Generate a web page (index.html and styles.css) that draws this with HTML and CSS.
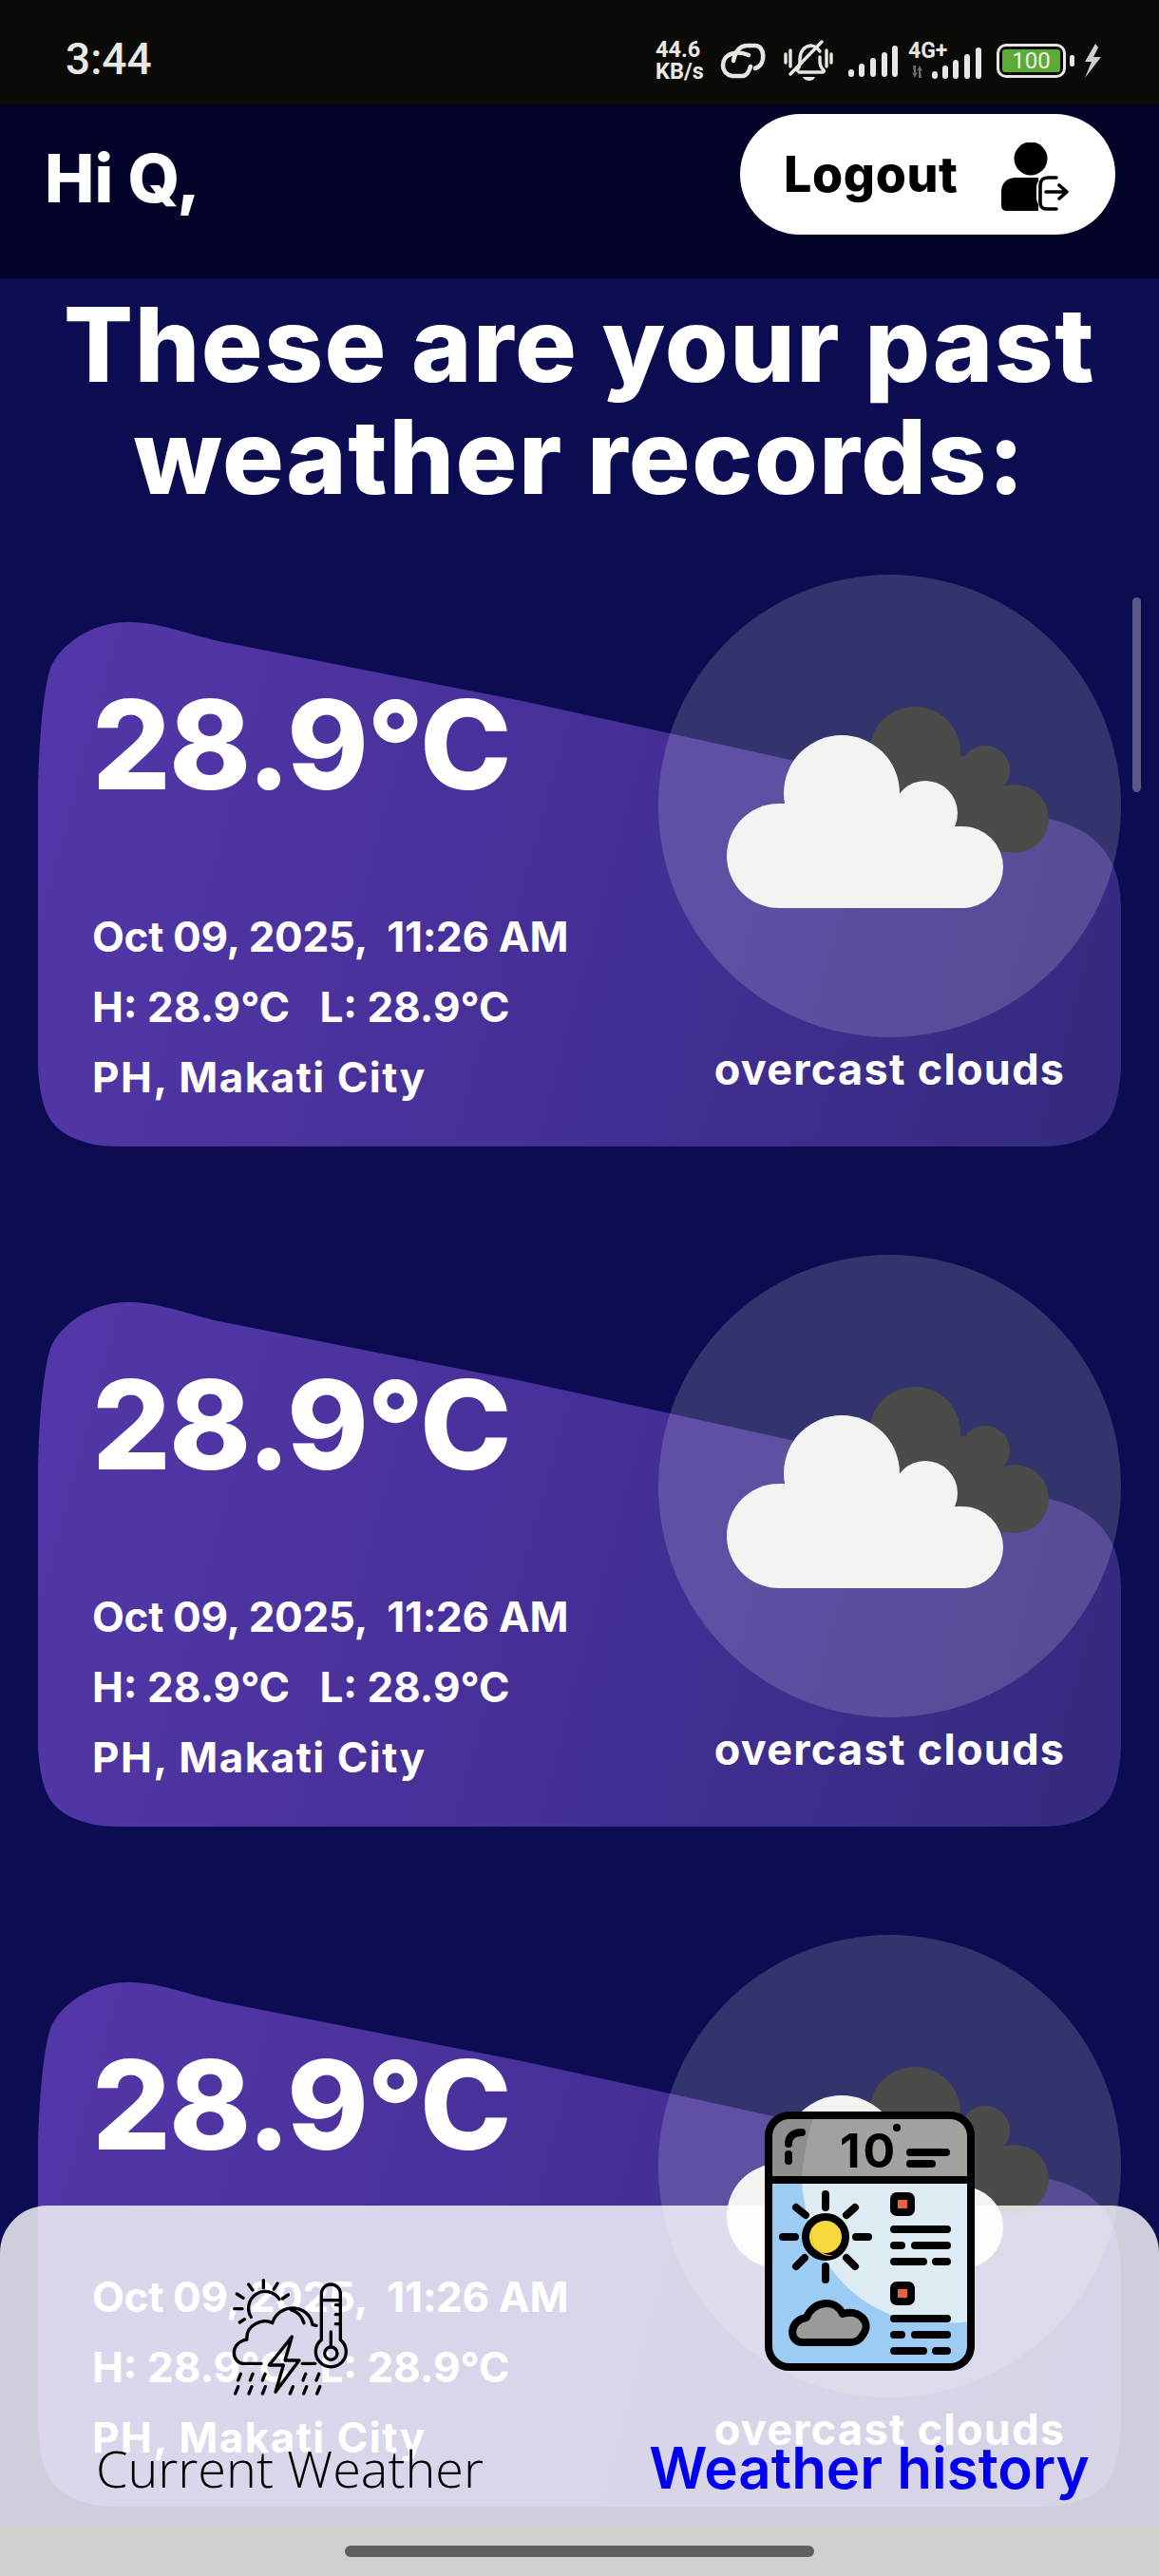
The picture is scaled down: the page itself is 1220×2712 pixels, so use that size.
FILE: index.html
```html
<!DOCTYPE html>
<html lang="en">
<head>
<meta charset="utf-8">
<title>Weather history</title>
<link rel="stylesheet" href="styles.css">
</head>
<body>
<div class="screen">
  <div class="status">
    <span class="clock">3:44</span>
    <div class="status-icons">
      <div class="speed"><span>44.6</span><span>KB/s</span></div>
      <svg class="ico-link" viewBox="0 0 49 40"><g fill="none" stroke="#e6e6e2" stroke-width="4.6" stroke-linecap="round"><path d="M31 14C24 11 17 11 12 13 2 17 0 33 14 36H24C29 36 32 30 33 26"/><path d="M15 20C17 10 22 4 30 4H38C48 4 50 24 38 28"/></g></svg>
      <svg class="ico-bell" viewBox="0 0 52 44"><g fill="none" stroke="#e6e6e2" stroke-width="3.4" stroke-linecap="round"><path d="M2 15v9M7 11v17M45 11v17M50 15v9"/><path d="M14 32c3-3 3-7 3-12 0-7 4-13 11-14 4 0 8 3 10 6"/><path d="M38 18v5c0 4 2 7 4 9 1 1 0 2-1 2H16"/><path d="M40 2 7 36"/></g><path d="M20 39h13c-1 3-4 4-6 4s-6-1-7-4z" fill="#e6e6e2"/></svg>
      <svg class="ico-signal" viewBox="0 0 52 33"><g fill="#e6e6e2"><rect x="0" y="25" width="6" height="8" rx="3"/><rect x="11" y="19" width="6" height="14" rx="3"/><rect x="23" y="13" width="6" height="20" rx="3"/><rect x="35" y="7" width="6" height="26" rx="3"/><rect x="46" y="0" width="6" height="33" rx="3"/></g></svg>
      <div class="net">
        <span class="net-label">4G+</span>
        <svg class="ico-net" viewBox="0 0 77 38"><g fill="#6c6c6a"><path d="M5 24h3v8l2-1-3 6-3-6 2 1zM14 37h-3v-8l-2 1 3-6 3 6-2-1z"/></g><g fill="#e6e6e2"><rect x="25" y="30" width="6" height="8" rx="3"/><rect x="36" y="24" width="6" height="14" rx="3"/><rect x="47" y="18" width="6" height="20" rx="3"/><rect x="59" y="12" width="6" height="26" rx="3"/><rect x="71" y="5" width="6" height="33" rx="3"/></g></svg>
      </div>
      <div class="battery"><div class="battery-body"><span class="battery-level">100</span></div><span class="battery-nub"></span></div>
      <svg class="ico-bolt" viewBox="0 0 19 36"><path d="M13 0 2 19l7 0-7 17 17-22-8 0 5-10z" fill="#cfcfcb"/></svg>
    </div>
  </div>

  <header class="topbar">
    <h2 class="greeting">Hi Q,</h2>
    <button class="logout" type="button">
      <span class="logout-label">Logout</span>
      <svg class="logout-icon" viewBox="0 0 71 72"><circle cx="31" cy="17" r="17.5" fill="#000"/><path d="M0 52c0-10 7-15 15-15h24v35H6c-4 0-6-2-6-6z" fill="#000"/><rect x="37" y="34" width="34" height="38" rx="14" fill="#fff"/><path d="M58 37h-9c-5 0-8 3-8 8v19c0 4 3 6 7 6h10" fill="none" stroke="#000" stroke-width="3.6" stroke-linecap="round"/><path d="M47 52h22M61 45l8 7-8 7" fill="none" stroke="#000" stroke-width="3.6" stroke-linecap="round" stroke-linejoin="round"/></svg>
    </button>
  </header>

  <h1 class="title">These are your past weather records:</h1>

  <section class="records">
    <article class="card">
      <div class="card-info">
        <div class="temp">28.9°C</div>
        <p class="meta meta-date">Oct 09, 2025,&nbsp; 11:26 AM</p>
        <p class="meta">H: 28.9°C &nbsp; L: 28.9°C</p>
        <p class="meta meta-place">PH, Makati City</p>
      </div>
      <div class="card-side">
        <div class="orb">
          <svg class="cloud" viewBox="0 0 400 260"><g fill="#4b4b49"><circle cx="226" cy="73" r="48"/><circle cx="300" cy="92" r="26"/><circle cx="331" cy="143" r="36"/><path d="M220 70 300 80 330 178H250z"/></g><g fill="#f3f3f1"><circle cx="83" cy="182" r="55"/><circle cx="149" cy="116" r="61"/><circle cx="237" cy="137" r="34"/><circle cx="276" cy="194" r="43"/><path d="M83 127H237V151H276V237H83z"/></g></svg>
        </div>
        <div class="desc">overcast clouds</div>
      </div>
    </article>
    <article class="card">
      <div class="card-info">
        <div class="temp">28.9°C</div>
        <p class="meta meta-date">Oct 09, 2025,&nbsp; 11:26 AM</p>
        <p class="meta">H: 28.9°C &nbsp; L: 28.9°C</p>
        <p class="meta meta-place">PH, Makati City</p>
      </div>
      <div class="card-side">
        <div class="orb">
          <svg class="cloud" viewBox="0 0 400 260"><g fill="#4b4b49"><circle cx="226" cy="73" r="48"/><circle cx="300" cy="92" r="26"/><circle cx="331" cy="143" r="36"/><path d="M220 70 300 80 330 178H250z"/></g><g fill="#f3f3f1"><circle cx="83" cy="182" r="55"/><circle cx="149" cy="116" r="61"/><circle cx="237" cy="137" r="34"/><circle cx="276" cy="194" r="43"/><path d="M83 127H237V151H276V237H83z"/></g></svg>
        </div>
        <div class="desc">overcast clouds</div>
      </div>
    </article>
    <article class="card">
      <div class="card-info">
        <div class="temp">28.9°C</div>
        <p class="meta meta-date">Oct 09, 2025,&nbsp; 11:26 AM</p>
        <p class="meta">H: 28.9°C &nbsp; L: 28.9°C</p>
        <p class="meta meta-place">PH, Makati City</p>
      </div>
      <div class="card-side">
        <div class="orb">
          <svg class="cloud" viewBox="0 0 400 260"><g fill="#4b4b49"><circle cx="226" cy="73" r="48"/><circle cx="300" cy="92" r="26"/><circle cx="331" cy="143" r="36"/><path d="M220 70 300 80 330 178H250z"/></g><g fill="#f3f3f1"><circle cx="83" cy="182" r="55"/><circle cx="149" cy="116" r="61"/><circle cx="237" cy="137" r="34"/><circle cx="276" cy="194" r="43"/><path d="M83 127H237V151H276V237H83z"/></g></svg>
        </div>
        <div class="desc">overcast clouds</div>
      </div>
    </article>
  </section>

  <div class="scroll-thumb"></div>

  <div class="dock">
    <nav class="tabs">
      <a class="tab">
        <svg class="tab-icon-current" viewBox="0 0 510 480"><g fill="none" stroke="#000" stroke-width="10" stroke-linecap="round" stroke-linejoin="round"><path d="M133 178A45 45 0 1 1 222 122"/><path d="M172 62v24M125 75l13 18M216 72l-11 18M88 105l20 13M80 152h25M97 195l15-10M250 108l-18 12"/><path d="M165 325h-55c-38 0-48-66 10-76-5-45 50-70 80-52 20-65 115-62 127 5l12 3"/><path d="M258 155c20 5 35 20 42 42"/><path d="M295 325h40"/><path d="M262 240 190 330h45l-25 85 75-100h-45z"/><path d="M355 250V105a30 30 0 0 1 60 0V250a48 48 0 1 1-60 0z"/><circle cx="385" cy="293" r="20"/><path d="M385 225v46M355 125h60M400 140h15M400 170h15M400 200h15"/><path d="M100 358l-8 20M138 358l-8 20M177 358l-8 20M305 358l-8 20M347 358l-8 20M92 398l-9 22M135 398l-9 22M178 398l-9 22M265 398l-9 22M308 398l-9 22M350 398l-9 22"/></g></svg>
        <span class="tab-label">Current Weather</span>
      </a>
      <a class="tab tab-active">
        <svg class="tab-icon-history" viewBox="0 0 221 273">
          <rect x="4" y="4" width="213" height="265" rx="22" fill="#9ccbf3"/>
          <path d="M39 72C42 130 70 190 133 214 160 222 190 224 217 221V72z" fill="#dcecf2"/>
          <path d="M4 72V26C4 12 14 4 26 4H195c12 0 22 8 22 22V72z" fill="#8f8e8a"/>
          <path d="M52 4C44 28 40 50 39 72H217V26c0-12-10-22-22-22z" fill="#a3a19e"/>
          <g fill="none" stroke="#000" stroke-width="8" stroke-linecap="round" stroke-linejoin="round">
            <rect x="4" y="4" width="213" height="265" rx="22"/>
            <path d="M4 72H217" stroke-linecap="butt"/>
            <path d="M39 22c-9 0-14 4-14 12M25 45v7"/>
            <path d="M153 43h38M153 55h23"/>
            <circle cx="64" cy="132" r="21" fill="#f6d93c"/>
            <path d="M64 87v14M64 163v14M19 132h13M96 132h13M33 101l10 8M95 101l-9 8M33 163l9-9M95 163l-9-9"/>
            <path d="M40 243C24 243 26 219 44 217 50 200 74 196 82 213 100 208 112 222 104 234 100 241 96 243 90 243z" fill="#9b9a97"/>
            <rect x="136" y="89" width="18" height="17" rx="3" fill="#e8603c"/>
            <rect x="136" y="183" width="18" height="17" rx="3" fill="#e8603c"/>
            <path d="M136 124h56M136 141h8M158 141h34M136 158h31M180 158h12"/>
            <path d="M136 218h56M136 235h8M158 235h34M136 252h31M180 252h12"/>
          </g>
          <path d="M50 125a21 21 0 0 0 23 26c-12 5-28-10-23-26z" fill="#efb42c"/>
          <circle cx="139" cy="17" r="4" fill="#000"/>
          <text class="icon-digits" x="79" y="59">10</text>
        </svg>
        <span class="tab-label">Weather history</span>
      </a>
    </nav>
    <div class="gesture"><span class="gesture-handle"></span></div>
  </div>
</div>
</body>
</html>
```

FILE: styles.css
```css
* {
  box-sizing: border-box;
}

html,
body {
  margin: 0;
  padding: 0;
}

body {
  font-family: Inter, "Liberation Sans", sans-serif;
  background: #0c0c52;
}

.screen {
  position: relative;
  width: 1220px;
  height: 2712px;
  overflow: hidden;
  background: #0c0c52;
  color: #fff;
}

/* status bar */
.status {
  display: flex;
  align-items: center;
  justify-content: space-between;
  height: 110px;
  padding: 0 61px 0 69px;
  background: #0a0a06;
  color: #e8e8e4;
}

.clock {
  font-family: Roboto, "Liberation Sans", sans-serif;
  font-size: 46px;
  font-weight: 500;
  line-height: 1;
  margin-top: 14px;
}

.status-icons {
  display: flex;
  align-items: center;
  margin-top: 17px;
}

.speed {
  display: flex;
  flex-direction: column;
  width: 52px;
  font-family: Roboto, "Liberation Sans", sans-serif;
  font-size: 23.5px;
  font-weight: 700;
  line-height: 23px;
  margin-right: 15px;
  white-space: nowrap;
}

.ico-link {
  width: 49px;
  height: 40px;
  margin-right: 19px;
}

.ico-bell {
  width: 52px;
  height: 44px;
  margin-right: 16px;
}

.ico-signal {
  width: 52px;
  height: 33px;
  margin-right: 11px;
  margin-top: 2px;
}

.net {
  display: flex;
  flex-direction: column;
  width: 77px;
  height: 38px;
  margin-right: 16px;
  position: relative;
}

.net-label {
  position: absolute;
  top: 0;
  left: 0;
  font-family: Roboto, "Liberation Sans", sans-serif;
  font-size: 23px;
  font-weight: 700;
  line-height: 18px;
  color: #e6e6e2;
}

.ico-net {
  width: 77px;
  height: 38px;
}

.battery {
  display: flex;
  align-items: center;
  margin-right: 9px;
}

.battery-body {
  display: flex;
  width: 73px;
  height: 36px;
  padding: 3px;
  border: 3px solid #e6e6e2;
  border-radius: 10px;
}

.battery-level {
  flex: 1;
  background: #5aab38;
  border-radius: 3px;
  color: #efefe9;
  font-family: Roboto, "Liberation Sans", sans-serif;
  font-size: 24px;
  font-weight: 400;
  line-height: 24px;
  text-align: center;
}

.battery-nub {
  width: 5px;
  height: 12px;
  margin-left: 4px;
  background: #e6e6e2;
  border-radius: 2px;
}

.ico-bolt {
  width: 19px;
  height: 36px;
}

/* app header */
.topbar {
  display: flex;
  align-items: flex-start;
  justify-content: space-between;
  height: 183px;
  padding: 10px 46px 0 47px;
  background: #03032a;
}

.greeting {
  margin: 28px 0 0;
  font-size: 70px;
  font-weight: 800;
  line-height: 80px;
}

.logout {
  display: flex;
  align-items: center;
  width: 395px;
  height: 127px;
  padding: 0 0 0 46px;
  border: 0;
  border-radius: 64px;
  background: #fff;
  color: #000;
  font-family: inherit;
}

.logout-label {
  width: 229px;
  font-size: 52px;
  font-weight: 800;
  letter-spacing: 0.6px;
  text-align: left;
}

.logout-icon {
  width: 71px;
  height: 72px;
  margin-top: 4px;
}

/* heading */
.title {
  width: 1180px;
  margin: 11px auto 0;
  font-size: 108px;
  font-weight: 800;
  line-height: 118px;
  text-align: center;
  letter-spacing: 1.5px;
}

/* cards */
.records {
  display: flex;
  flex-direction: column;
  gap: 164px;
  margin-top: 115px;
  padding: 0 40px;
}

.card {
  position: relative;
  display: flex;
  justify-content: space-between;
  height: 552px;
}

.card::before {
  content: "";
  position: absolute;
  inset: 0;
  background: linear-gradient(105deg, #5437a9 0%, #442f95 55%, #332a7e 100%);
  clip-path: path("M0 170C2 110 6 75 12 52 18 30 50 0 95 0 125 0 150 10 190 20L510 83 792 145 1068 208C1105 217 1140 240 1140 300V470C1137 510 1130 530 1105 542 1090 549 1075 552 1055 552H85C65 552 50 549 35 542 10 530 3 510 0 470Z");
}

.card-info {
  position: relative;
  padding: 54px 0 0 57px;
}

.temp {
  font-size: 130px;
  font-weight: 800;
  line-height: 150px;
  letter-spacing: -1.8px;
}

.meta {
  margin: 0;
  font-size: 44px;
  font-weight: 700;
  line-height: 74px;
  white-space: nowrap;
}

.temp + .meta {
  margin-top: 90px;
}

.meta-date {
  letter-spacing: -0.3px;
}

.meta-place {
  letter-spacing: 1.5px;
}

.card-side {
  position: relative;
  display: flex;
  flex-direction: column;
  align-items: center;
  width: 487px;
  margin-top: -50px;
}

.orb {
  display: flex;
  align-items: center;
  justify-content: center;
  width: 487px;
  height: 487px;
  flex: none;
  border-radius: 50%;
  background: rgba(255, 255, 255, 0.16);
}

.cloud {
  width: 400px;
  height: 260px;
}

.desc {
  margin-top: 4px;
  font-size: 45px;
  font-weight: 700;
  line-height: 60px;
  letter-spacing: 1.3px;
  white-space: nowrap;
}

.scroll-thumb {
  position: absolute;
  top: 629px;
  right: 19px;
  width: 9px;
  height: 205px;
  border-radius: 5px;
  background: rgba(255, 255, 255, 0.32);
}

/* bottom navigation */
.dock {
  position: absolute;
  left: 0;
  right: 0;
  bottom: 0;
  display: flex;
  flex-direction: column;
}

.tabs {
  display: grid;
  grid-template-columns: 1fr 1fr;
  height: 338px;
  padding-bottom: 27px;
  border-radius: 50px 50px 0 0;
  background: rgba(255, 255, 255, 0.8);
}

.tab {
  display: flex;
  flex-direction: column;
  align-items: center;
  justify-content: flex-end;
  min-height: 0;
}

.tab-icon-current {
  width: 170px;
  height: 160px;
  flex: none;
  margin-bottom: 23px;
}

.tab-icon-history {
  width: 221px;
  height: 273px;
  flex: none;
  margin-bottom: 67px;
}

.icon-digits {
  font-family: Inter, "Liberation Sans", sans-serif;
  font-size: 50px;
  font-weight: 700;
  letter-spacing: 3px;
  fill: #000;
}

.tab-label {
  color: #000;
  font-family: "Open Sans", "Liberation Sans", sans-serif;
  font-size: 54px;
  font-weight: 300;
  line-height: 70px;
  white-space: nowrap;
}

.tab-active .tab-label {
  color: #0000ee;
  font-family: Inter, "Liberation Sans", sans-serif;
  font-size: 60px;
  font-weight: 600;
}

.gesture {
  display: flex;
  justify-content: center;
  height: 52px;
  padding-top: 20px;
  background: #d0d1cd;
}

.gesture-handle {
  width: 494px;
  height: 12px;
  border-radius: 6px;
  background: #5f5f5d;
}
```
